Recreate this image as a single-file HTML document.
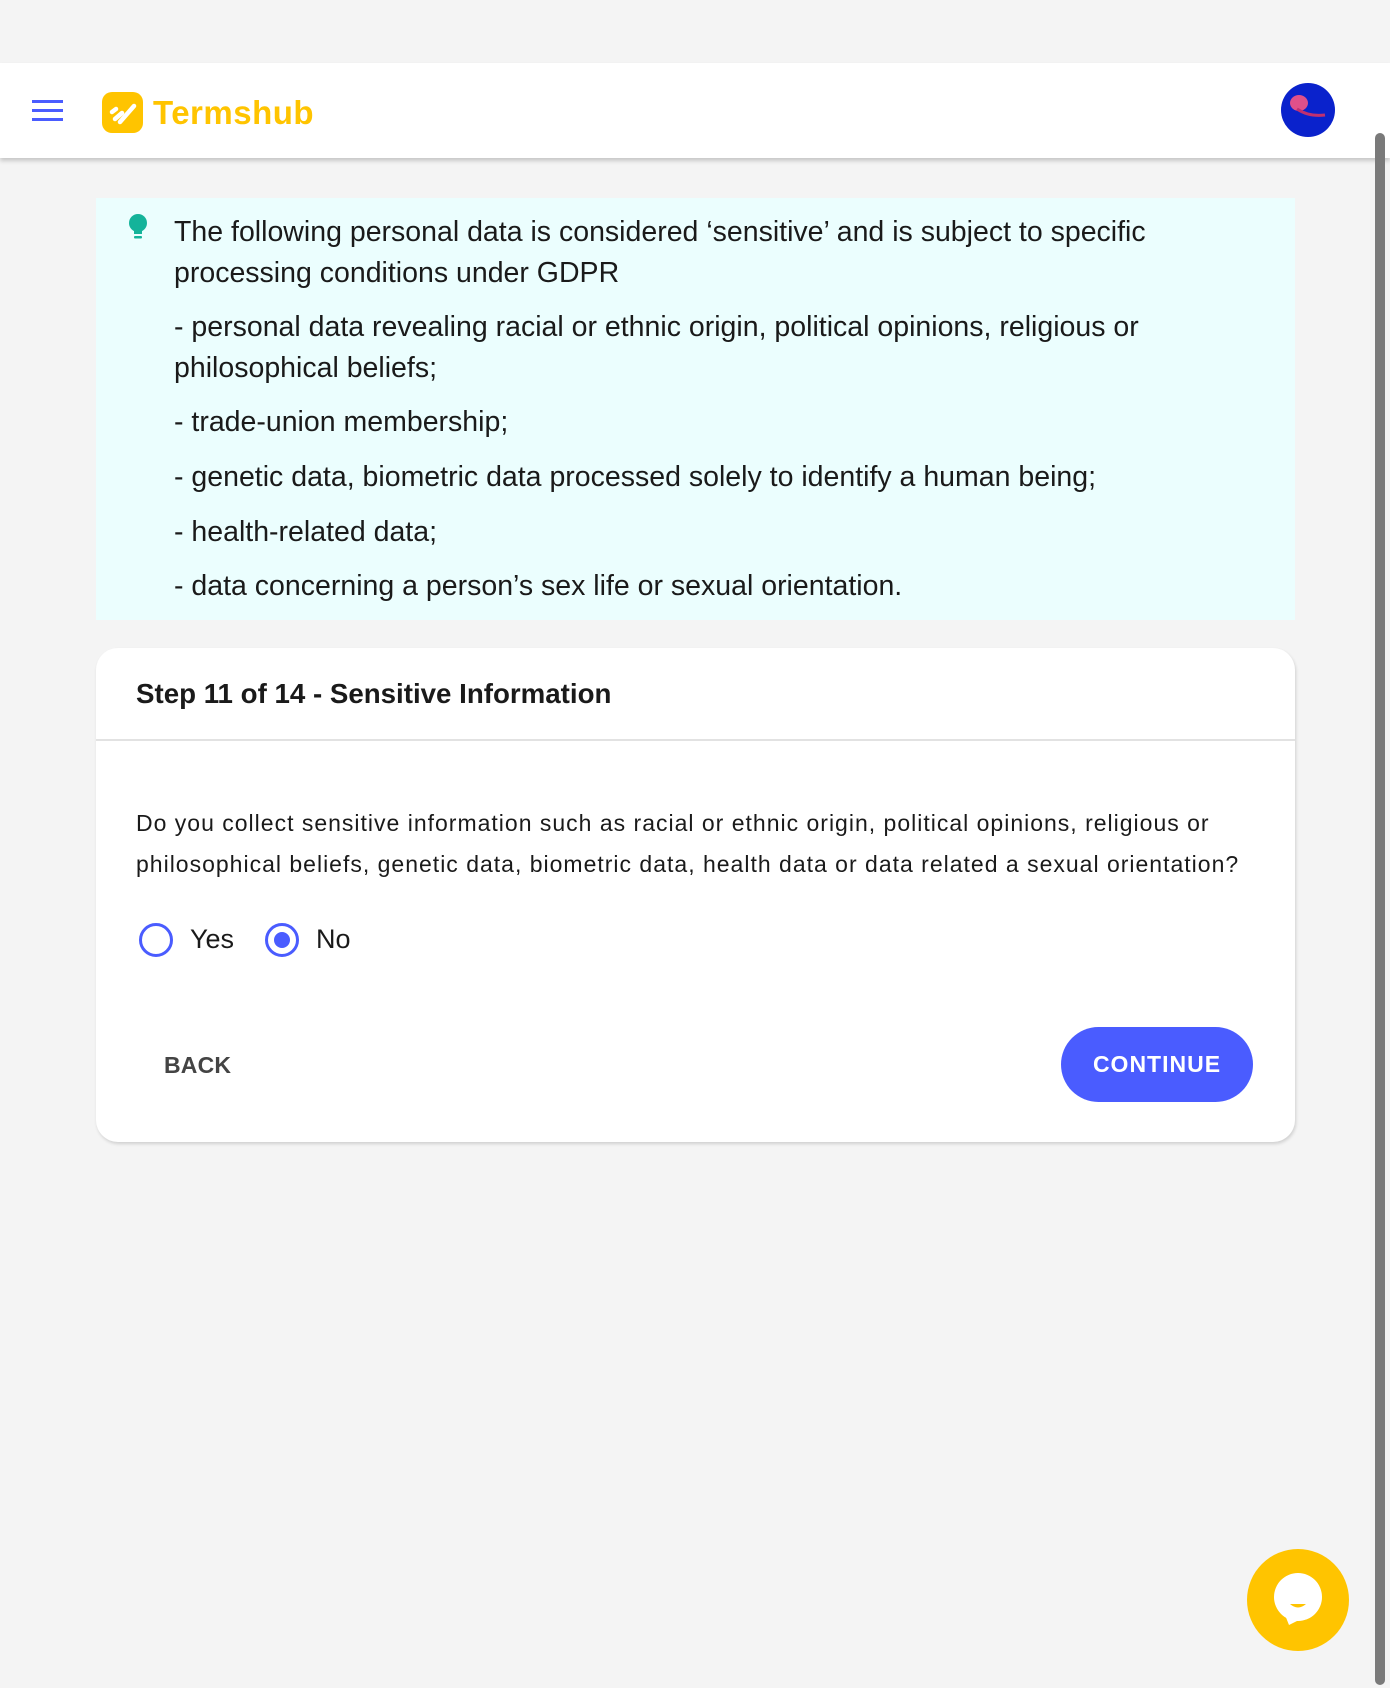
<!DOCTYPE html>
<html><head><meta charset="utf-8"><style>
*{margin:0;padding:0;box-sizing:border-box}
html,body{width:1390px;height:1688px;overflow:hidden;background:#f4f4f4;font-family:"Liberation Sans",sans-serif;color:#1a1a1a}
.hdr{position:absolute;left:0;top:63px;width:1390px;height:95px;background:#fff;box-shadow:0 3px 4px rgba(0,0,0,.18)}
.hb{position:absolute;left:32px;width:31px;height:3px;background:#4a5cff}
.logo{position:absolute;left:102px;top:29px;width:41px;height:41px;border-radius:10px;background:#ffc400}
.brand{position:absolute;left:153px;top:31px;font-size:33px;font-weight:bold;color:#ffc400;letter-spacing:.5px}
.av{position:absolute;left:1281px;top:20px;width:54px;height:54px;border-radius:50%;background:#0a22cc;overflow:hidden}
.sb{position:absolute;left:1375px;top:133px;width:10px;height:1552px;border-radius:5px;background:#7a7a7a}
.info{position:absolute;left:96px;top:198px;width:1199px;height:422px;background:#ebfefe}
.t p{position:absolute;left:174px;font-size:28.5px;line-height:41px;white-space:nowrap}
.card{position:absolute;left:96px;top:648px;width:1199px;height:494px;background:#fff;border-radius:22px;box-shadow:1px 2px 3px rgba(0,0,0,.15)}
.title{position:absolute;left:40px;top:30px;font-size:27.7px;font-weight:bold}
.div{position:absolute;left:0;top:91px;width:100%;height:2px;background:#e2e2e2}
.q{position:absolute;left:40px;top:155px;font-size:23px;letter-spacing:1px;line-height:41px;white-space:nowrap}
.r{position:absolute;top:275px;width:34px;height:34px;border-radius:50%;border:3px solid #4a5cff}
.rl{position:absolute;top:276px;font-size:27px}
.back{position:absolute;left:68px;top:404px;font-size:23px;font-weight:bold;color:#444;letter-spacing:.2px}
.cont{position:absolute;left:965px;top:379px;width:192px;height:75px;border-radius:38px;background:#4a5cff;color:#fff;font-size:23px;font-weight:bold;letter-spacing:1px;text-align:center;line-height:75px}
.chat{position:absolute;left:1247px;top:1549px;width:102px;height:102px;border-radius:50%;background:#ffc400}
</style></head><body>
<div class="hdr">
 <div class="hb" style="top:37px"></div><div class="hb" style="top:46px"></div><div class="hb" style="top:55px"></div>
 <div class="logo"><svg width="41" height="41"><g stroke="#fff" stroke-width="4.5" stroke-linecap="round"><line x1="10" y1="20" x2="14" y2="17"/><line x1="13" y1="27" x2="20" y2="21"/><line x1="18" y1="30" x2="32" y2="14"/></g></svg></div>
 <div class="brand">Termshub</div>
 <div class="av"><svg width="54" height="54"><ellipse cx="18" cy="20" rx="9" ry="8" fill="#e0508a"/><path d="M16 26 Q28 34 44 32" stroke="#c03070" stroke-width="3" fill="none"/></svg></div>
</div>
<div class="sb"></div>
<div class="info">
 <svg style="position:absolute;left:32px;top:16px" width="20" height="28"><ellipse cx="10" cy="9" rx="9" ry="9" fill="#14b39a"/><rect x="6" y="14" width="8" height="6" fill="#14b39a"/><rect x="6" y="22" width="8" height="2.5" rx="1" fill="#14b39a"/></svg>
</div>
<div class="t">
 <p style="top:212px">The following personal data is considered ‘sensitive’ and is subject to specific</p>
 <p style="top:253px">processing conditions under GDPR</p>
 <p style="top:307px">- personal data revealing racial or ethnic origin, political opinions, religious or</p>
 <p style="top:348px">philosophical beliefs;</p>
 <p style="top:402px">- trade-union membership;</p>
 <p style="top:457px">- genetic data, biometric data processed solely to identify a human being;</p>
 <p style="top:512px">- health-related data;</p>
 <p style="top:566px">- data concerning a person’s sex life or sexual orientation.</p>
</div>
<div class="card">
 <div class="title">Step 11 of 14 - Sensitive Information</div>
 <div class="div"></div>
 <div class="q">Do you collect sensitive information such as racial or ethnic origin, political opinions, religious or<br>philosophical beliefs, genetic data, biometric data, health data or data related a sexual orientation?</div>
 <div class="r" style="left:43px"></div><div class="rl" style="left:94px">Yes</div>
 <div class="r" style="left:169px"><div style="position:absolute;left:6px;top:6px;width:16px;height:16px;border-radius:50%;background:#4a5cff"></div></div><div class="rl" style="left:220px">No</div>
 <div class="back">BACK</div>
 <div class="cont">CONTINUE</div>
</div>
<div class="chat"><svg width="102" height="102"><circle cx="51" cy="48" r="24" fill="#fff"/><path d="M38 66 L42 76 L54 70 Z" fill="#fff"/><path d="M43 55 Q51 62 59 55 Z" fill="#ffc400"/></svg></div>
</body></html>
